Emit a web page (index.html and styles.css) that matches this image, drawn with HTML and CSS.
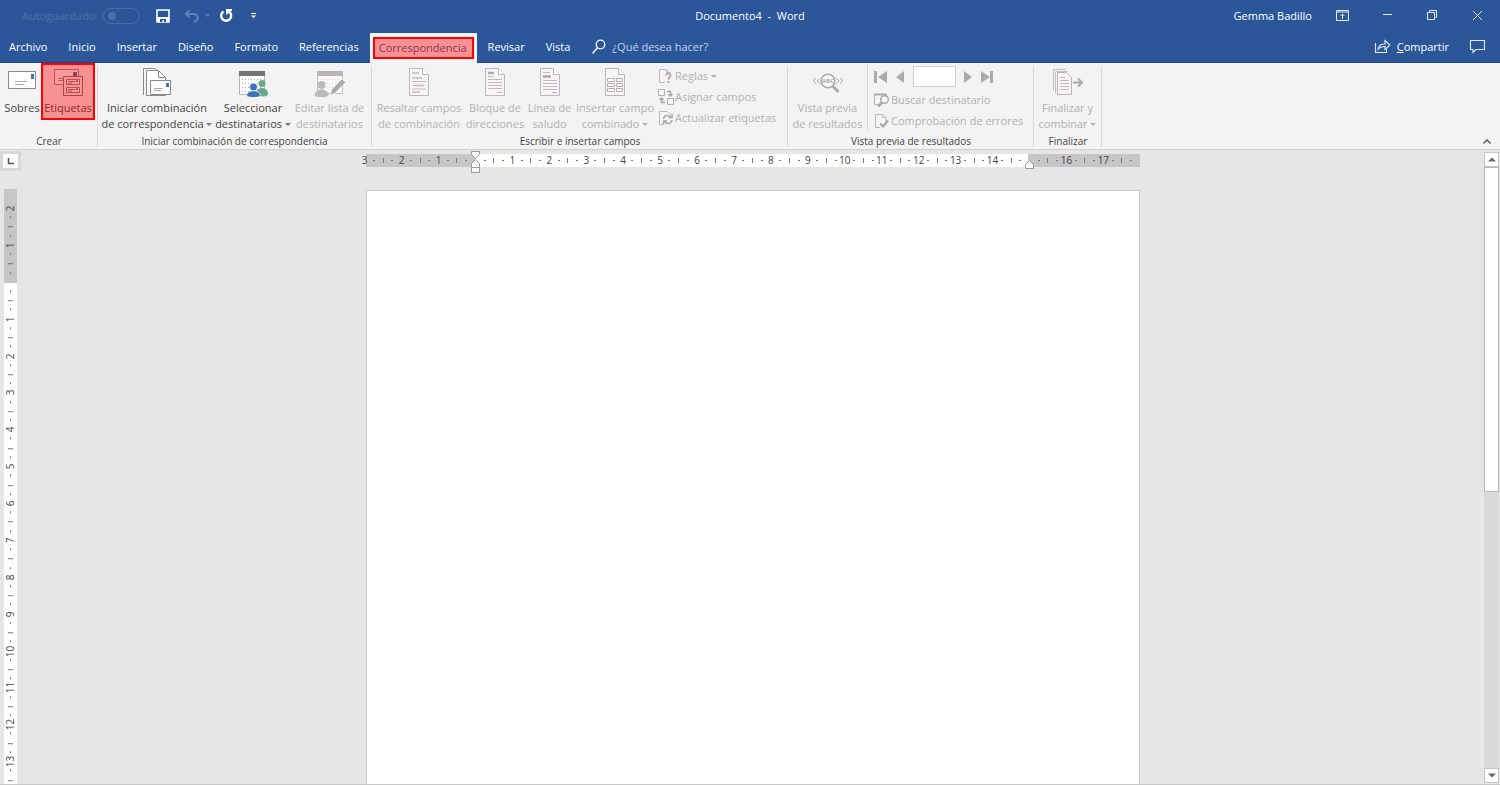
FILE: index.html
```html
<!DOCTYPE html>
<html lang="es">
<head>
<meta charset="utf-8">
<title>Documento4 - Word</title>
<link rel="stylesheet" href="styles.css">
</head>
<body>
<svg class="defs" aria-hidden="true">
  <symbol id="sheet" viewBox="0 0 22 28">
    <path d="M1.500 .5h13l6 6v21h-19z" fill="#f8f4f8" stroke="#bcb7bc"/><path d="M14.500 .5v6h6" fill="#fff" stroke="#bcb7bc"/>
  </symbol>
</svg>
<header class="top">
  <div class="titlebar">
    <div class="quick">
      <label class="autosave"><span>Autoguardado</span><input type="checkbox" role="switch" disabled></label>
      <button class="qbtn save" aria-label="Guardar"><svg width="14" height="14" viewBox="0 0 14 14"><path d="M1 1h12v12H1z" fill="none" stroke="#fff" stroke-width="1.6"/><path d="M1 8h12v5H1z" fill="#fff"/><path d="M4 10h6v3H8v-2H6.500v2H4z" fill="#2b579a"/></svg></button>
      <button class="qbtn undo" aria-label="Deshacer" disabled><svg width="27" height="14" viewBox="0 0 27 14"><path d="M5.500 1.500L2 5l3.500 3.500M2.500 5h7c6 0 5 7.500 0 7.500" fill="none" stroke="#5d80b8" stroke-width="2"/><path d="M21 5h5l-2.500 3z" fill="#5d80b8"/></svg></button>
      <button class="qbtn redo" aria-label="Rehacer"><svg width="14" height="15" viewBox="0 0 14 15"><path d="M4.500 3.500A5 5 0 1 0 10.500 4" fill="none" stroke="#fff" stroke-width="2.400"/><path d="M7 1h6v2h-2l0 1-4 3z" fill="#fff"/></svg></button>
      <button class="qbtn more" aria-label="Personalizar"><svg width="7" height="8" viewBox="0 0 7 8"><path d="M1 1.500h5" stroke="#fff"/><path d="M1 3.500h5L3.500 6z" fill="#fff"/></svg></button>
    </div>
    <h1 class="doc">Documento4&nbsp; -&nbsp; Word</h1>
    <div class="window">
      <span class="user">Gemma Badillo</span>
      <button aria-label="Opciones de cinta"><svg width="13" height="11" viewBox="0 0 13 11" fill="none" stroke="#e4eaf4"><path d="M.5.5h12v10H.5zM.5 2h12M6.500 9V4M4.500 6l2-2 2 2"/></svg></button>
      <button aria-label="Minimizar"><svg width="11" height="11" viewBox="0 0 11 11"><path d="M1 4.500h9" stroke="#e4eaf4"/></svg></button>
      <button aria-label="Restaurar"><svg width="11" height="11" viewBox="0 0 11 11" fill="none" stroke="#e4eaf4"><path d="M.5 2.500h7v7h-7zM2.500 2.500v-2h7v7h-2"/></svg></button>
      <button aria-label="Cerrar"><svg width="11" height="11" viewBox="0 0 11 11" stroke="#e4eaf4"><path d="M1 1l9 9M10 1l-9 9"/></svg></button>
    </div>
  </div>
  <nav class="tabs">
    <a href="#">Archivo</a><a href="#">Inicio</a><a href="#">Insertar</a><a href="#">Diseño</a><a href="#">Formato</a><a href="#">Referencias</a><a href="#" class="active" aria-current="page"><span>Correspondencia</span></a><a href="#">Revisar</a><a href="#">Vista</a>
    <label class="search"><svg width="16" height="16" viewBox="0 0 16 16" fill="none" stroke="#fff" stroke-width="1.300"><circle cx="9.500" cy="5.500" r="4.300"/><path d="M6.500 8.800L1.500 14.500"/></svg><input type="text" placeholder="¿Qué desea hacer?" aria-label="¿Qué desea hacer?"></label>
    <button class="share"><svg width="17" height="15" viewBox="0 0 17 15" fill="none" stroke="#e4eaf4" stroke-width="1.100"><path d="M1.500 4v9.500h11V10M4 10.500c.500-4 3-5.500 7-5.500V1.500l5 4.500-5 4.500V7.500c-3 0-5 .5-7 3z"/></svg><span><u>C</u>ompartir</span></button>
    <button class="comment" aria-label="Comentarios"><svg width="17" height="15" viewBox="0 0 17 15" fill="none" stroke="#e4eaf4" stroke-width="1.100"><path d="M1.500 1.500h14v9H7L4 13.500v-3H1.500z"/></svg></button>
  </nav>
</header>

<main class="ribbon">
  <section class="group g-create">
    <div class="items">
      <button class="big w-a"><svg width="30" height="30" viewBox="0 0 30 30"><path d="M1.500 4.500h27v17h-27z" fill="#fff" stroke="#8a8a8a"/><path d="M24 7h3v5h-3z" fill="#3e74b5"/><path d="M8 14.500h12M8 17.500h9" stroke="#aaa"/></svg><span>Sobres</span></button>
      <button class="big w-b marked"><svg width="30" height="30" viewBox="0 0 30 30"><path d="M1.500 2.500h24v15h-24z" fill="#fff" stroke="#8a8a8a"/><path d="M20 5h4v4h-4z" fill="#3e74b5"/><path d="M5 11.500h5M5 13.500h5" stroke="#999"/><path d="M10.500 9.500h19v19h-19z" fill="#f6f6f6" stroke="#777"/><path d="M13.500 12.500h13v5h-13zM13.500 20.500h13v5h-13z" fill="#fff" stroke="#888"/><path d="M15 14.500h7M15 16h4M15 22.500h7M15 24h4" stroke="#888"/><path d="M23 13.500h2v1.500h-2zM23 21.500h2V23h-2z" fill="#3e74b5"/></svg><span>Etiquetas</span></button>
    </div>
    <h2>Crear</h2>
  </section>
  <section class="group g-start">
    <div class="items">
      <button class="big w-c"><svg width="30" height="30" viewBox="0 0 30 30"><path d="M1.500 28V1.500H13l2 2" fill="none" stroke="#8a8a8a"/><path d="M4.500 3.500h12l7 7v18h-19z" fill="#fff" stroke="#8a8a8a"/><path d="M16.500 3.500v7h7" fill="none" stroke="#8a8a8a"/><path d="M8.500 13.500h20v14h-20z" fill="#fff" stroke="#8a8a8a"/><path d="M24 16h3v4h-3z" fill="#3e74b5"/><path d="M12 21.500h9M12 23.500h7" stroke="#aaa"/></svg><span>Iniciar combinación<br>de correspondencia <i class="caret"></i></span></button>
      <button class="big w-d"><svg width="30" height="30" viewBox="0 0 30 30"><path d="M1.500 4.500h25v23h-25z" fill="#fff" stroke="#b5b5b5"/><path d="M1 4h26v5H1z" fill="#747474"/><path d="M4 12.500h20M4 16.500h20M4 20.500h20M4 24.500h10" stroke="#aaa" stroke-dasharray="1 2"/><circle cx="24" cy="16.500" r="3.500" fill="#6aa98c"/><path d="M17 28c0-9 13-9 13-1 0 3-6 3-13 1z" fill="#6aa98c"/><circle cx="15.500" cy="20" r="4" fill="#3e74b5" stroke="#fff" stroke-width=".7"/><path d="M8.500 29c0-7 14-7 14 0-2 2-12 2-14 0z" fill="#3e74b5" stroke="#fff" stroke-width=".7"/></svg><span>Seleccionar<br>destinatarios <i class="caret"></i></span></button>
      <button class="big w-e" disabled><svg width="32" height="30" viewBox="0 0 32 30"><path d="M3.500 4.500h25v22h-25z" fill="#fbf8fb" stroke="#c4c0c4"/><path d="M3 4h26v5H3z" fill="#b9b5b9"/><path d="M6 12.500h20M6 16.500h20M6 20.500h20" stroke="#d4d0d4" stroke-dasharray="1 2"/><circle cx="7.500" cy="18" r="4" fill="#bbb"/><path d="M.500 28.500c0-8 14-8 14 0-2 2-12 2-14 0z" fill="#bbb"/><path d="M16 28l2-6L28 12l3.500 3.500L21 26z" fill="#aaa" stroke="#f3f3f3" stroke-width=".7"/></svg><span>Editar lista de<br>destinatarios</span></button>
    </div>
    <h2>Iniciar combinación de correspondencia</h2>
  </section>
  <section class="group g-write">
    <div class="items">
      <button class="big w-f" disabled><svg width="22" height="30" viewBox="0 -1 22 30"><use href="#sheet" width="22" height="28"/><path d="M4 5h7M4 10h10M8 17.500h8M4 24h8" stroke="#ccc8cc" stroke-width="2"/><path d="M4 13.500h14M4 21h14M5 17.500h3" stroke="#bbb"/></svg><span>Resaltar campos<br>de combinación</span></button>
      <button class="big w-g" disabled><svg width="22" height="30" viewBox="0 -1 22 30"><use href="#sheet" width="22" height="28"/><path d="M4 5h6" stroke="#aaa" stroke-width="2.500"/><path d="M4 8.500h6M4 11.500h14M4 14.500h14M4 17.500h14M4 20.500h14M13 24.500h5" stroke="#bbb"/></svg><span>Bloque de<br>direcciones</span></button>
      <button class="big w-h" disabled><svg width="22" height="30" viewBox="0 -1 22 30"><use href="#sheet" width="22" height="28"/><path d="M4 8.500h8" stroke="#aaa" stroke-width="2.500"/><path d="M4 4.500h7M4 12.500h14M4 15.500h14M4 18.500h14M4 21.500h14M13 24.500h5" stroke="#bbb"/></svg><span>Línea de<br>saludo</span></button>
      <button class="big w-i" disabled><svg width="22" height="30" viewBox="0 -1 22 30"><use href="#sheet" width="22" height="28"/><path d="M3.500 10.500h7v3h-7zM12.500 10.500h6v3h-6zM3.500 15.500h7v3h-7zM12.500 15.500h6v3h-6zM3.500 20.500h7v3h-7zM12.500 20.500h6v3h-6z" fill="#fff" stroke="#b2aeb2"/></svg><span>Insertar campo<br>combinado <i class="caret"></i></span></button>
      <div class="stack">
        <button class="small" disabled><svg width="16" height="16" viewBox="0 0 16 16"><path d="M7 14.500H1.500v-13H8l4 4" fill="#f8f4f8" stroke="#bcb7bc"/><path d="M8.500 1.500v3H12" fill="none" stroke="#bcb7bc"/><path d="M8 7.500c0-2.500 5-2.500 4.500 0 0 2-2 1.500-2 4M10.500 13v2" fill="none" stroke="#a5a5a5" stroke-width="1.700"/></svg><span>Reglas <i class="caret"></i></span></button>
        <button class="small" disabled><svg width="16" height="16" viewBox="0 0 16 16" fill="none" stroke="#b2aeb2"><path d="M.500.500h6v6h-6zM9.500 9.500h6v6h-6z" fill="#f8f4f8"/><path d="M9 2.500h3.500V7M10.500 5l2 2 2-2M7 13.500H3.500V9M1.500 11l2-2 2 2" stroke="#a5a5a5" stroke-width="1.400"/></svg><span>Asignar campos</span></button>
        <button class="small" disabled><svg width="16" height="16" viewBox="0 0 16 16" fill="none"><path d="M5 14.500H1.500v-13H9l4 3" fill="#f8f4f8" stroke="#bcb7bc"/><path d="M5.500 9c.5-4 5-4.500 7-2M14 4v3.500h-3.500M14 10c-.5 4-5 4.500-7 2M5.500 14.500V11H9" stroke="#aaa" stroke-width="1.600"/></svg><span>Actualizar etiquetas</span></button>
      </div>
    </div>
    <h2>Escribir e insertar campos</h2>
  </section>
  <section class="group g-preview">
    <div class="items">
      <button class="big w-j" disabled><svg width="32" height="30" viewBox="0 0 32 30" fill="none" stroke="#aaa"><circle cx="16" cy="14" r="6.800" fill="#f7f7f7" stroke-width="1.600"/><path d="M20.500 19l6 6" stroke-width="3"/><path d="M4 11l-3 3 3 3M8 11l-3 3 3 3M24 11l3 3-3 3M28 11l3 3-3 3"/><text x="16" y="16" class="abc">ABC</text></svg><span>Vista previa<br>de resultados</span></button>
      <div class="stack wide">
        <div class="records">
          <button disabled aria-label="Primero"><svg width="14" height="14" viewBox="0 0 14 14" fill="#aaa"><path d="M0 1h3v12H0zM13 1v12L4 7z"/></svg></button>
          <button disabled aria-label="Anterior"><svg width="14" height="14" viewBox="0 0 14 14" fill="#aaa"><path d="M11 1v12L3 7z"/></svg></button>
          <input type="text" aria-label="Registro">
          <button disabled aria-label="Siguiente"><svg width="14" height="14" viewBox="0 0 14 14" fill="#aaa"><path d="M3 1v12l8-6z"/></svg></button>
          <button disabled aria-label="Último"><svg width="14" height="14" viewBox="0 0 14 14" fill="#aaa"><path d="M10 1h3v12h-3zM1 1v12l9-6z"/></svg></button>
        </div>
        <button class="small" disabled><svg width="16" height="16" viewBox="0 0 16 16" fill="none"><path d="M6 12.500H.500v-10H12" stroke="#b8b4b8"/><path d="M0 2.500h13" stroke="#aaa" stroke-width="2"/><circle cx="10.500" cy="7.500" r="3.800" fill="#f7f7f7" stroke="#aaa" stroke-width="1.500"/><path d="M8 10.500L4 14.500" stroke="#aaa" stroke-width="2.500"/></svg><span>Buscar destinatario</span></button>
        <button class="small" disabled><svg width="16" height="16" viewBox="0 0 16 16" fill="none"><path d="M6 14.500H1.500v-13H9l3 3v4" fill="#f8f4f8" stroke="#bcb7bc"/><path d="M8.500 1.500v3H12" stroke="#bcb7bc"/><path d="M6 10.500l3 3 5-6" stroke="#a5a5a5" stroke-width="2"/></svg><span>Comprobación de errores</span></button>
      </div>
    </div>
    <h2>Vista previa de resultados</h2>
  </section>
  <section class="group g-finish">
    <div class="items">
      <button class="big w-k" disabled><svg width="32" height="30" viewBox="0 0 32 30" fill="none"><path d="M1.500 24V2.500h12M3.500 26V4.500h12" stroke="#c4bfc4"/><path d="M5.500 5.500h9l5 5v17h-14z" fill="#f8f4f8" stroke="#b8b3b8"/><path d="M8 10.500h5M8 13.500h9M8 16.500h9M8 19.500h9M8 22.500h9" stroke="#bbb"/><path d="M21 15.500h9M26 11.500l4 4-4 4" stroke="#aaa" stroke-width="2"/></svg><span>Finalizar y<br>combinar <i class="caret"></i></span></button>
    </div>
    <h2>Finalizar</h2>
  </section>
  <button class="collapse" aria-label="Contraer la cinta"><svg width="10" height="7" viewBox="0 0 10 7"><path d="M1.500 5.500L5 2l3.500 3.500" fill="none" stroke="#666" stroke-width="1.600"/></svg></button>
</main>

<div class="work">
  <div class="left">
    <button class="tabstop" aria-label="Tabulación izquierda"><svg width="8" height="8" viewBox="0 0 8 8"><path d="M1.500 1v5.500H7" fill="none" stroke="#555" stroke-width="1.500"/></svg></button>
    <div class="vruler"><div class="marks" data-from="-2" data-count="63"></div></div>
  </div>
  <div class="canvas">
    <div class="hruler">
      <div class="marks" data-from="-3" data-count="84" data-skip="15"></div>
      <svg class="indent first" width="10" height="24" viewBox="0 0 10 24"><path d="M.5 1.500h8v3l-4 4-4-4zM.5 15.500v-2l4-4 4 4v9h-8zM.5 17.500h8" fill="#fff" stroke="#999"/></svg>
      <svg class="indent right" width="10" height="10" viewBox="0 0 10 10"><path d="M.5 8.500v-4l4-4 4 4v4z" fill="#fff" stroke="#999"/></svg>
    </div>
    <article class="page" aria-label="Documento"></article>
  </div>
  <div class="scroll">
    <button aria-label="Subir"><svg width="8" height="5" viewBox="0 0 8 5"><path d="M0 4.500h8L4 .5z" fill="#666"/></svg></button>
    <div class="track"><div class="thumb"></div></div>
    <button aria-label="Bajar"><svg width="8" height="5" viewBox="0 0 8 5"><path d="M0 .5h8L4 4.500z" fill="#666"/></svg></button>
  </div>
</div>
<script src="ruler.js"></script>
</body>
</html>
```

FILE: styles.css
```css
* { box-sizing: border-box; }
body {
  margin: 0; height: 100vh; display: flex; flex-direction: column; overflow: hidden;
  font: 11px/16px "Open Sans", "Noto Sans", sans-serif; color: #444; background: #e6e6e6;
}
button, input { font: inherit; color: inherit; background: none; border: 0; padding: 0; margin: 0; }
h1, h2 { margin: 0; font-weight: 400; }
svg { display: block; flex: none; }
.defs { position: absolute; width: 0; height: 0; }

.top { background: #2b579a; color: #fff; border-bottom: 1px solid #20468a; flex: none; }
.titlebar { height: 31px; display: grid; grid-template-columns: 1fr auto 1fr; align-items: center; }
.quick { display: flex; align-items: center; padding-left: 22px; }
.autosave { display: flex; align-items: center; gap: 5px; color: #4870ae; }
.autosave span { width: 76px; white-space: nowrap; }
.autosave input { appearance: none; width: 37px; height: 16px; border: 1px solid #4870ae; border-radius: 8px; display: flex; align-items: center; padding-left: 4px; }
.autosave input::before { content: ""; width: 8px; height: 8px; border-radius: 50%; background: #4870ae; }
.save { margin-left: 16px; }
.undo { margin-left: 14px; }
.redo { margin-left: 8px; }
.more { margin-left: 17px; }
.doc { font-size: 11px; line-height: 16px; }
.window { display: flex; align-items: center; justify-content: flex-end; padding-right: 16px; }
.window button { width: 13px; margin-left: 32px; display: flex; justify-content: center; }
.window .user + button { margin-left: 24px; }

.tabs { height: 31px; display: flex; align-items: stretch; gap: 1px; padding-right: 14px; }
.tabs a { color: #fff; text-decoration: none; padding: 0 10px; display: flex; align-items: center; }
.tabs a:first-child { padding-left: 9px; }
.tabs .active { background: #f3f3f3; color: #2b579a; padding: 0 3px; margin-top: 2px; height: 30px; }
.tabs .active span { border: 2px solid #f00; background: rgba(255, 0, 0, .4); padding: 1px 5px 1px 4px; color: #90305c; height: 22px; line-height: 16px; }
.search { display: flex; align-items: center; gap: 5px; margin-left: 10px; flex: 1; }
.search input { width: 120px; outline: 0; }
.search input::placeholder { color: #c3d0e6; opacity: 1; }
.share { display: flex; align-items: center; gap: 6px; }
.comment { margin-left: 19px; }

.ribbon { display: flex; position: relative; background: #f3f3f3; border-bottom: 1px solid #d0d0d0; flex: none; height: 87px; }
.group { display: flex; flex-direction: column; position: relative; flex: none; }
.group::after { content: ""; position: absolute; right: 0; top: 3px; bottom: 2px; width: 1px; background: #d9d9d9; }
.items { display: flex; height: 71px; }
.group h2 { font-size: 10px; line-height: 16px; text-align: center; }
.g-create { width: 98px; }
.g-start { width: 274px; padding-left: 2px; }
.g-start h2 { padding-right: 3px; }
.g-write { width: 416px; }
.g-preview { width: 246px; }
.g-finish { width: 68px; }
.big { display: flex; flex-direction: column; align-items: center; padding-top: 4px; gap: 3px; white-space: nowrap; flex: none; }
.big > span { display: block; text-align: center; }
button:disabled { color: #b1b1b1; }
.w-a { width: 41px; padding-left: 3px; }
.w-b { width: 54px; }
.w-c { width: 114px; }
.w-d { width: 78px; }
.w-e { width: 75px; }
.w-f { width: 94px; }
.w-g { width: 58px; }
.w-h { width: 51px; }
.w-i { width: 80px; }
.w-j { width: 79px; }
.w-k { width: 67px; }
.marked { position: relative; }
.marked::after { content: ""; position: absolute; inset: 0 0 auto 0; height: 53px; border: 2px solid #f00; background: rgba(255, 0, 0, .4); }
.caret { display: inline-block; border: 3px solid transparent; border-top-color: #777; border-bottom: 0; vertical-align: 2px; }
button:disabled .caret { border-top-color: #b1b1b1; }
.stack { display: flex; flex-direction: column; padding: 5px 0 0 3px; gap: 5px; }
.small { display: flex; align-items: center; gap: 1px; height: 16px; white-space: nowrap; }
.wide { border-left: 1px solid #d9d9d9; padding: 2px 0 0 6px; margin: 1px 0 3px; }
.records { display: flex; align-items: center; gap: 5px; height: 21px; }
.records input { width: 43px; height: 21px; background: #fff; border: 1px solid #d0d0d0; margin-left: 1px; }
.abc { font-size: 6px; font-weight: 700; fill: #aaa; stroke: none; text-anchor: middle; }
.collapse { position: absolute; right: 8px; bottom: 4px; }

.work { flex: 1; min-height: 0; display: flex; border-bottom: 1px solid #c6c6c6; }
.left { width: 22px; display: flex; flex-direction: column; align-items: flex-start; padding: 1px 0 0; }
.tabstop { width: 21px; height: 20px; border: 3px solid #d8d8d8; background: #fdfdfd; display: grid; place-items: center; flex: none; }
.vruler { flex: 1; min-height: 0; width: 13px; margin: 18px 0 0 4px; padding-top: 15px; background: linear-gradient(#c6c6c6 94px, #fff 94px); overflow: hidden; }
.vruler .marks { height: 581px; flex-direction: column; }
.marks { display: flex; font-size: 10px; line-height: 13px; color: #444; }
.marks span { flex: 1 1 0; min-width: 0; min-height: 0; display: flex; align-items: center; justify-content: center; white-space: nowrap; }
.vruler .marks span { writing-mode: vertical-rl; transform: rotate(180deg); }
.marks .dot::before { content: ""; width: 2px; height: 1px; background: #777; }
.vruler .marks .dot::before { width: 1px; height: 2px; }
.marks .bar::before { content: ""; width: 1px; height: 5px; background: #777; }
.vruler .marks .bar::before { width: 5px; height: 1px; }
.canvas { flex: 1; display: flex; flex-direction: column; align-items: center; padding-top: 4px; min-width: 0; }
.hruler { width: 774px; height: 13px; position: relative; flex: none; margin-bottom: 23px; background: linear-gradient(90deg, #c6c6c6 109px, #fff 109px, #fff 662px, #c6c6c6 662px); }
.hruler .marks { position: absolute; left: -6px; width: 776px; height: 13px; }
.indent { position: absolute; }
.first { left: 105px; top: -4px; }
.right { left: 659px; top: 6px; }
.page { flex: 1; width: 774px; background: #fff; border: 1px solid #c9c9c9; border-bottom: 0; }
.scroll { width: 16px; display: flex; flex-direction: column; padding: 2px 1px 1px 0; }
.scroll button { height: 15px; background: #fff; border: 1px solid #c6c6c6; display: grid; place-items: center; flex: none; }
.track { flex: 1; background: #dadada; }
.thumb { height: 54%; background: #fff; border: 1px solid #b8b8b8; }
```

FILE: ruler.js
```js
// Each centimetre has four marks: its number, a dot, a half-way bar and a dot.
document.querySelectorAll('.marks').forEach(function (row) {
  var from = Number(row.dataset.from);
  var skip = Number(row.dataset.skip || 0);
  for (var i = 0; i < Number(row.dataset.count); i++) {
    var mark = document.createElement('span');
    var cm = from + i / 4;
    if (i % 4 === 0) {
      if (cm !== 0 && cm !== skip) mark.textContent = Math.abs(cm);
    } else {
      mark.className = i % 4 === 2 ? 'bar' : 'dot';
    }
    row.appendChild(mark);
  }
});
```
